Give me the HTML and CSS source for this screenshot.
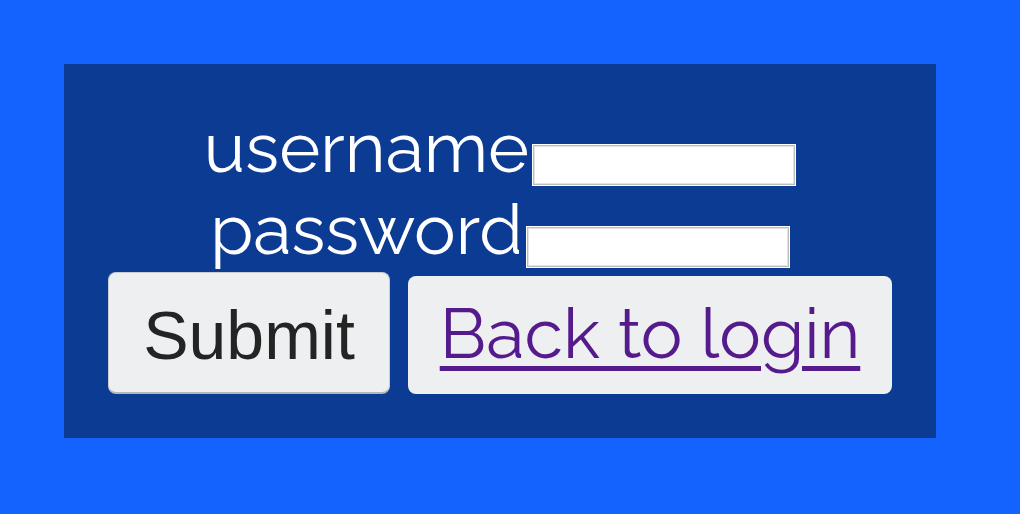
FILE: index.html
```html
<!DOCTYPE html>
<html>
<head>
<meta charset="utf-8">
<title>Reset password</title>
<link rel="stylesheet" href="styles.css">
</head>
<body>
<form class="panel">
  <div class="field">
    <label class="label" for="username">username</label>
    <input class="input" id="username" type="text">
  </div>
  <div class="field">
    <label class="label" for="password">password</label>
    <input class="input" id="password" type="password">
  </div>
  <div class="actions">
    <button class="btn btn-submit" type="button">Submit</button>
    <a class="btn btn-back" href="#">Back to login</a>
  </div>
</form>
</body>
</html>
```
FILE: styles.css
```css
html, body {
  margin: 0;
  padding: 0;
}
body {
  background: #1563ff;
  width: 1020px;
  height: 514px;
  overflow: hidden;
  font-family: Raleway, Lato, "Open Sans", sans-serif;
}
.panel {
  box-sizing: border-box;
  width: 872px;
  height: 374px;
  margin: 64px 0 0 64px;
  padding: 42px 44px 0 44px;
  background: #0c3b94;
  display: flex;
  flex-direction: column;
  align-items: center;
}
.field {
  display: flex;
  justify-content: center;
  align-items: flex-start;
  gap: 3px;
  height: 82px;
}
.label {
  color: #ffffff;
  font-size: 70px;
  line-height: 82px;
  font-weight: 400;
}
.input {
  box-sizing: border-box;
  width: 264px;
  height: 42px;
  margin-top: 38px;
  background: #ffffff;
  border: 1px solid #ffffff;
  box-shadow: inset 0 0 0 1px #bdbdbd, inset 0 0 0 2px #e3e3e3;
  padding: 0;
}
.actions {
  display: flex;
  align-items: flex-end;
  justify-content: center;
  gap: 18px;
  width: 100%;
  margin-top: 2px;
}
.btn {
  box-sizing: border-box;
  display: flex;
  align-items: center;
  justify-content: center;
  background: #eeeff1;
  border-radius: 8px;
}
.btn-submit {
  width: 282px;
  height: 122px;
  border: 1px solid #c9cbd0;
  border-bottom: 2px solid #b4b6bb;
  font-family: "Liberation Sans", Arial, sans-serif;
  font-size: 68px;
  color: #232525;
  padding: 4px 0 0 0;
}
.btn-back {
  width: 484px;
  height: 118px;
  border: none;
  font-size: 70px;
  color: #551a8b;
  text-decoration: underline;
  text-decoration-thickness: 5px;
  text-underline-offset: 8px;
  padding-bottom: 4px;
}
```
